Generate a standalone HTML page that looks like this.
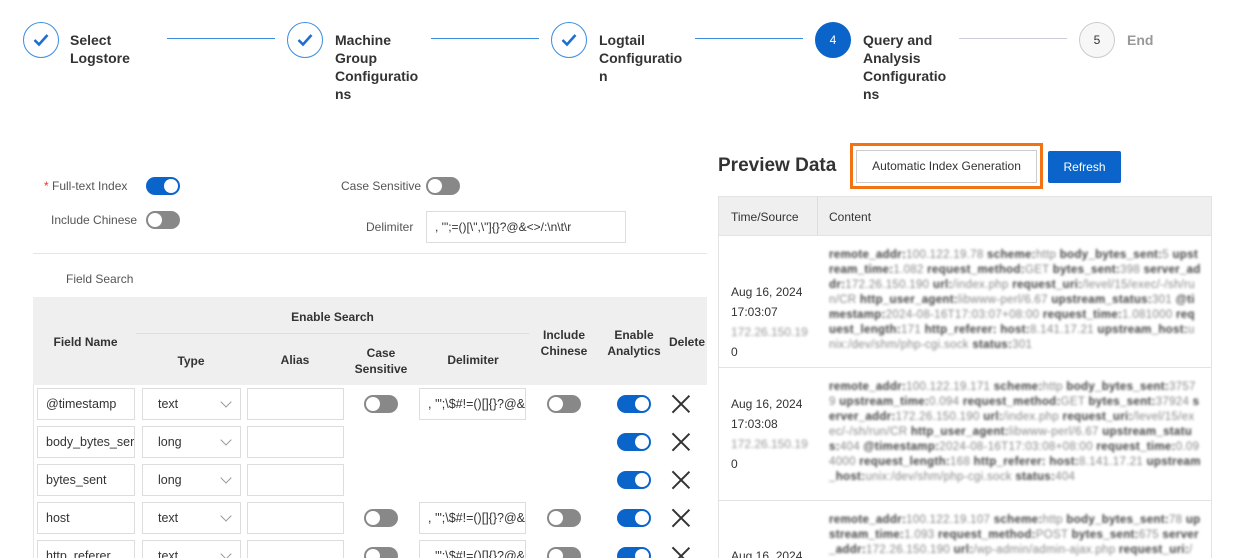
<!DOCTYPE html>
<html><head><meta charset="utf-8"><style>
*{box-sizing:border-box;margin:0;padding:0}
html,body{width:1243px;height:558px;overflow:hidden}
body{background:#fff;font-family:"Liberation Sans",sans-serif;color:#333;position:relative}
.a{position:absolute}
.circ{position:absolute;width:36px;height:36px;border-radius:50%;border:1.5px solid #3b8de0;display:flex;align-items:center;justify-content:center;font-size:12px}
.lbl{position:absolute;font-weight:bold;font-size:14px;line-height:18px;color:#333}
.ln{position:absolute;height:1px;background:#3b8de0;top:38px}
.tg{position:absolute;width:34px;height:18px;border-radius:9px;background:#888}
.tg::after{content:"";position:absolute;top:2px;left:2px;width:14px;height:14px;border-radius:50%;background:#fff}
.tg.on{background:#0a64c9}
.tg.on::after{left:18px}
.inp{position:absolute;height:32px;border:1px solid #ddd;background:#fff;font-size:12.5px;line-height:30px;padding-left:8px;white-space:nowrap;overflow:hidden}
.sel::after{content:"";position:absolute;right:10px;top:9px;width:7px;height:7px;border-right:1px solid #999;border-bottom:1px solid #999;transform:rotate(45deg)}
.x{position:absolute;width:18px;height:18px}
.x::before,.x::after{content:"";position:absolute;left:8px;top:-3px;width:1.5px;height:24px;background:#333;transform:rotate(45deg)}
.x::after{transform:rotate(-45deg)}
.th{position:absolute;font-weight:bold;font-size:12px;color:#333;text-align:center;line-height:16px}
.fl{position:absolute;font-size:12px;color:#555}
.blur{position:absolute;font-size:11.5px;line-height:15px;color:#888;filter:blur(1.3px);width:372px;word-break:break-all;letter-spacing:0.3px}
.blur b{color:#444}
.ts{position:absolute;font-size:12px;line-height:20px;color:#333;left:731px}
</style></head><body>
<!-- steps -->
<div class="circ" style="left:23px;top:22px"><svg width="18" height="16"><path d="M2.5 8l4.5 4.5L15.5 3" stroke="#1f6fd0" stroke-width="2.6" fill="none"/></svg></div>
<div class="lbl" style="left:70px;top:31px">Select<br>Logstore</div>
<div class="ln" style="left:167px;width:108px"></div>
<div class="circ" style="left:287px;top:22px"><svg width="18" height="16"><path d="M2.5 8l4.5 4.5L15.5 3" stroke="#1f6fd0" stroke-width="2.6" fill="none"/></svg></div>
<div class="lbl" style="left:335px;top:31px">Machine<br>Group<br>Configuratio<br>ns</div>
<div class="ln" style="left:431px;width:108px"></div>
<div class="circ" style="left:551px;top:22px"><svg width="18" height="16"><path d="M2.5 8l4.5 4.5L15.5 3" stroke="#1f6fd0" stroke-width="2.6" fill="none"/></svg></div>
<div class="lbl" style="left:599px;top:31px">Logtail<br>Configuratio<br>n</div>
<div class="ln" style="left:695px;width:108px"></div>
<div class="circ" style="left:815px;top:22px;background:#0a64c9;border-color:#0a64c9;color:#fff">4</div>
<div class="lbl" style="left:863px;top:31px">Query and<br>Analysis<br>Configuratio<br>ns</div>
<div class="ln" style="left:959px;width:108px;background:#ccd"></div>
<div class="circ" style="left:1079px;top:22px;border-color:#ccc;color:#333;background:#f7f7f7">5</div>
<div class="lbl" style="left:1127px;top:31px;color:#999">End</div>

<!-- form -->
<div class="fl" style="left:44px;top:179px"><span style="color:#e33">*</span> Full-text Index</div>
<div class="tg on" style="left:146px;top:177px"></div>
<div class="fl" style="left:51px;top:213px">Include Chinese</div>
<div class="tg" style="left:146px;top:211px"></div>
<div class="fl" style="left:341px;top:179px">Case Sensitive</div>
<div class="tg" style="left:426px;top:177px"></div>
<div class="fl" style="left:366px;top:220px">Delimiter</div>
<div class="inp" style="left:426px;top:211px;width:200px;font-size:12px">, '";=()[\",\"]{}?@&amp;&lt;&gt;/:\n\t\r</div>
<div class="a" style="left:33px;top:253px;width:674px;height:1px;background:#e5e5e5"></div>
<div class="fl" style="left:66px;top:272px">Field Search</div>

<!-- table -->
<div class="a" style="left:33px;top:297px;width:674px;height:261px;overflow:hidden">
<div class="a" style="left:0;top:0;width:674px;height:88px;background:#efefef"></div>
<div class="a" style="left:0;top:88px;width:1px;height:173px;background:#e5e5e5"></div>
<div class="a" style="left:103px;top:36px;width:393px;height:1px;background:#ddd"></div>
<div class="th" style="left:0;top:37px;width:105px">Field Name</div>
<div class="th" style="left:103px;top:12px;width:393px">Enable Search</div>
<div class="th" style="left:109px;top:56px;width:98px">Type</div>
<div class="th" style="left:214px;top:55px;width:96px">Alias</div>
<div class="th" style="left:312px;top:48px;width:72px">Case<br>Sensitive</div>
<div class="th" style="left:387px;top:55px;width:106px">Delimiter</div>
<div class="th" style="left:501px;top:30px;width:60px">Include<br>Chinese</div>
<div class="th" style="left:571px;top:30px;width:60px">Enable<br>Analytics</div>
<div class="th" style="left:636px;top:37px;width:50px;text-align:left">Delete</div>
</div>

<!-- rows -->
<div class="inp" style="left:37px;top:388px;width:98px">@timestamp</div>
<div class="inp sel" style="left:142px;top:388px;width:99px;padding-left:15px">text</div>
<div class="inp" style="left:247px;top:388px;width:97px"></div>
<div class="tg" style="left:364px;top:395px"></div>
<div class="inp" style="left:419px;top:388px;width:107px">, '";\$#!=()[]{}?@&amp;</div>
<div class="tg" style="left:547px;top:395px"></div>
<div class="tg on" style="left:617px;top:395px"></div>
<div class="x" style="left:672px;top:395px"></div>

<div class="inp" style="left:37px;top:426px;width:98px">body_bytes_ser</div>
<div class="inp sel" style="left:142px;top:426px;width:99px;padding-left:15px">long</div>
<div class="inp" style="left:247px;top:426px;width:97px"></div>
<div class="tg on" style="left:617px;top:433px"></div>
<div class="x" style="left:672px;top:433px"></div>

<div class="inp" style="left:37px;top:464px;width:98px">bytes_sent</div>
<div class="inp sel" style="left:142px;top:464px;width:99px;padding-left:15px">long</div>
<div class="inp" style="left:247px;top:464px;width:97px"></div>
<div class="tg on" style="left:617px;top:471px"></div>
<div class="x" style="left:672px;top:471px"></div>

<div class="inp" style="left:37px;top:502px;width:98px">host</div>
<div class="inp sel" style="left:142px;top:502px;width:99px;padding-left:15px">text</div>
<div class="inp" style="left:247px;top:502px;width:97px"></div>
<div class="tg" style="left:364px;top:509px"></div>
<div class="inp" style="left:419px;top:502px;width:107px">, '";\$#!=()[]{}?@&amp;</div>
<div class="tg" style="left:547px;top:509px"></div>
<div class="tg on" style="left:617px;top:509px"></div>
<div class="x" style="left:672px;top:509px"></div>

<div class="inp" style="left:37px;top:540px;width:98px">http_referer</div>
<div class="inp sel" style="left:142px;top:540px;width:99px;padding-left:15px">text</div>
<div class="inp" style="left:247px;top:540px;width:97px"></div>
<div class="tg" style="left:364px;top:547px"></div>
<div class="inp" style="left:419px;top:540px;width:107px">, '";\$#!=()[]{}?@&amp;</div>
<div class="tg" style="left:547px;top:547px"></div>
<div class="tg on" style="left:617px;top:547px"></div>
<div class="x" style="left:672px;top:547px"></div>

<!-- preview -->
<div class="a" style="left:718px;top:155px;font-size:19px;font-weight:bold;color:#333">Preview Data</div>
<div class="a" style="left:850px;top:143px;width:193px;height:46px;border:3px solid #f27316"></div>
<div class="a" style="left:856px;top:150px;width:181px;height:33px;border:1px solid #ccc;background:#fff;font-size:12px;text-align:center;line-height:31px">Automatic Index Generation</div>
<div class="a" style="left:1048px;top:151px;width:73px;height:32px;background:#0a64c9;border-radius:2px;color:#fff;font-size:12px;text-align:center;line-height:32px">Refresh</div>

<div class="a" style="left:718px;top:196px;width:494px;height:362px;border:1px solid #e3e3e3;border-bottom:none"></div>
<div class="a" style="left:719px;top:197px;width:492px;height:39px;background:#efefef;border-bottom:1px solid #e3e3e3"></div>
<div class="a" style="left:817px;top:197px;width:1px;height:39px;background:#ddd"></div>
<div class="a" style="left:731px;top:210px;font-size:12px">Time/Source</div>
<div class="a" style="left:829px;top:210px;font-size:12px">Content</div>
<div class="a" style="left:719px;top:367px;width:492px;height:1px;background:#e3e3e3"></div>
<div class="a" style="left:719px;top:500px;width:492px;height:1px;background:#e3e3e3"></div>

<div class="ts" style="top:282px">Aug 16, 2024<br>17:03:07<br><span style="filter:blur(1.3px);color:#999;display:inline-block">172.26.150.19</span><br>0</div>
<div class="ts" style="top:394px">Aug 16, 2024<br>17:03:08<br><span style="filter:blur(1.3px);color:#999;display:inline-block">172.26.150.19</span><br>0</div>
<div class="ts" style="top:546px">Aug 16, 2024</div>

<div class="blur" style="left:829px;top:248px"><b>remote_addr:</b>100.122.19.78 <b>scheme:</b>http <b>body_bytes_sent:</b>5 <b>upstream_time:</b>1.082 <b>request_method:</b>GET <b>bytes_sent:</b>398 <b>server_addr:</b>172.26.150.190 <b>url:</b>/index.php <b>request_uri:</b>/level/15/exec/-/sh/run/CR <b>http_user_agent:</b>libwww-perl/6.67 <b>upstream_status:</b>301 <b>@timestamp:</b>2024-08-16T17:03:07+08:00 <b>request_time:</b>1.081000 <b>request_length:</b>171 <b>http_referer: host:</b>8.141.17.21 <b>upstream_host:</b>unix:/dev/shm/php-cgi.sock <b>status:</b>301</div>
<div class="blur" style="left:829px;top:380px"><b>remote_addr:</b>100.122.19.171 <b>scheme:</b>http <b>body_bytes_sent:</b>37579 <b>upstream_time:</b>0.094 <b>request_method:</b>GET <b>bytes_sent:</b>37924 <b>server_addr:</b>172.26.150.190 <b>url:</b>/index.php <b>request_uri:</b>/level/15/exec/-/sh/run/CR <b>http_user_agent:</b>libwww-perl/6.67 <b>upstream_status:</b>404 <b>@timestamp:</b>2024-08-16T17:03:08+08:00 <b>request_time:</b>0.094000 <b>request_length:</b>168 <b>http_referer: host:</b>8.141.17.21 <b>upstream_host:</b>unix:/dev/shm/php-cgi.sock <b>status:</b>404</div>
<div class="blur" style="left:829px;top:513px"><b>remote_addr:</b>100.122.19.107 <b>scheme:</b>http <b>body_bytes_sent:</b>78 <b>upstream_time:</b>1.093 <b>request_method:</b>POST <b>bytes_sent:</b>675 <b>server_addr:</b>172.26.150.190 <b>url:</b>/wp-admin/admin-ajax.php <b>request_uri:</b>/wp-</div>
</body></html>
